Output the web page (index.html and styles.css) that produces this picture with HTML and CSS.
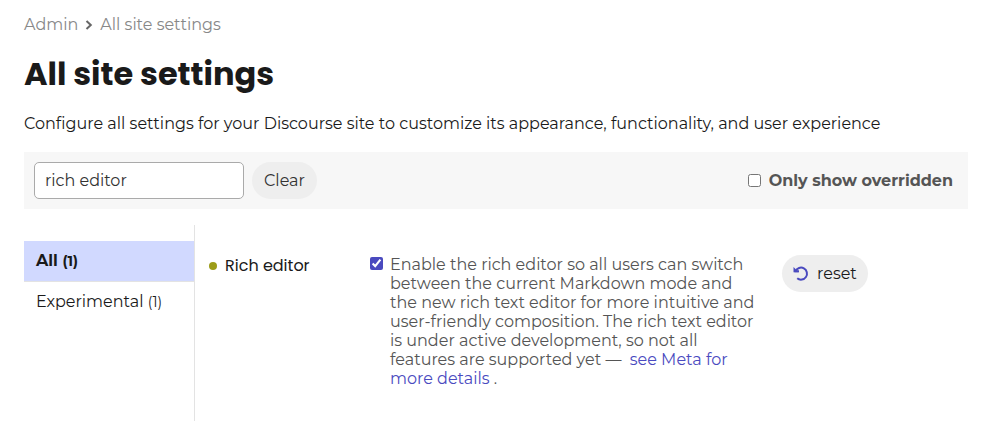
FILE: index.html
```html
<!DOCTYPE html>
<html lang="en">
<head>
  <meta charset="UTF-8">
  <meta name="viewport" content="width=device-width, initial-scale=1.0">
  <title>All site settings</title>
  <link rel="stylesheet" href="styles.css">
</head>
<body>
  <header class="page-header">
    <nav class="breadcrumbs">
      <a href="#">Admin</a>
      <svg class="chevron" viewBox="0 0 8 10" aria-hidden="true"><path d="M1.500 1l4.300 4-4.300 4"/></svg>
      <a href="#">All site settings</a>
    </nav>
    <h1>All site settings</h1>
    <p class="description">Configure all settings for your Discourse site to customize its appearance, functionality, and user experience</p>
  </header>

  <div class="controls">
    <input type="text" class="filter" value="rich editor" aria-label="Filter settings">
    <button type="button" class="btn">Clear</button>
    <label class="overridden"><input type="checkbox" class="checkbox"> Only show overridden</label>
  </div>

  <main class="settings">
    <nav class="categories">
      <a class="category active" href="#">All <span class="count">(1)</span></a>
      <a class="category" href="#">Experimental <span class="count">(1)</span></a>
    </nav>
    <section class="setting">
      <h3 class="setting-name">Rich editor</h3>
      <div class="setting-value">
        <input type="checkbox" class="checkbox" id="rich-editor" checked>
        <label for="rich-editor">Enable the rich editor so all users can switch between the current Markdown mode and the new rich text editor for more intuitive and user-friendly composition. The rich text editor is under active development, so not all features are supported yet —&nbsp; <a href="#">see Meta for more details</a> .</label>
      </div>
      <button type="button" class="btn reset">
        <svg class="undo" viewBox="0 0 16 16" aria-hidden="true">
          <path class="arrow" d="M.5 1v5.200h5.200z"/>
          <path d="M1.500 5.300H6M2.500 5.200A6 6 0 1 1 4.200 12.300"/>
        </svg>
        reset
      </button>
    </section>
  </main>
</body>
</html>
```
FILE: styles.css
```css
* {
  box-sizing: border-box;
}
body {
  margin: 0;
  padding: 15px 14px 0 24px;
  min-height: 100vh;
  display: flex;
  flex-direction: column;
  background: #fff;
  color: #1a1a1a;
  font-family: Montserrat, Inter, sans-serif;
  font-size: 16px;
  line-height: 19px;
}
a {
  color: #4a4abf;
  text-decoration: none;
}
.breadcrumbs {
  display: flex;
  align-items: center;
  gap: 7px;
}
.breadcrumbs a {
  color: #888;
}
.chevron {
  width: 8px;
  height: 10px;
  fill: none;
  stroke: #666;
  stroke-width: 2;
}
h1 {
  margin: 20px 0;
  font-family: Poppins, Inter, sans-serif;
  font-size: 32px;
  line-height: 40px;
  font-weight: 700;
}
.description {
  margin: 0 0 19px;
}
.controls {
  display: flex;
  align-items: center;
  gap: 8px;
  padding: 10px 15px 10px 10px;
  background: #f7f7f7;
}
.filter {
  width: 210px;
  height: 37px;
  padding: 0 10px;
  border: 1px solid #aaa;
  border-radius: 5px;
  background: #fff;
  color: #333;
  font: inherit;
}
.btn {
  height: 37px;
  padding: 0 12px;
  border: none;
  border-radius: 19px;
  background: #eee;
  color: #333;
  font: inherit;
  cursor: pointer;
}
.checkbox {
  flex: none;
  width: 13px;
  height: 13px;
  margin: 0;
  accent-color: #4a4abf;
}
.overridden {
  display: flex;
  align-items: center;
  gap: 8px;
  margin-left: auto;
  color: #555;
  font-weight: 700;
}
.settings {
  flex: 1;
  display: flex;
  margin-top: 16px;
}
.categories {
  width: 171px;
  padding-top: 16px;
  border-right: 1px solid #e3e3e3;
}
.category {
  display: block;
  padding: 10px 12px;
  border-bottom: 1px solid transparent;
  color: #1a1a1a;
}
.category.active {
  background: #d1d9ff;
  border-color: #e3e3e3;
  font-weight: 700;
}
.count {
  font-size: 14px;
}
.setting {
  flex: 1;
  display: flex;
  align-items: flex-start;
  padding: 30px 0 0 14px;
}
.setting-name {
  display: flex;
  align-items: center;
  gap: 8px;
  width: 161px;
  margin: 0;
  padding-top: 1px;
  font-family: Poppins, Inter, sans-serif;
  font-size: 16px;
  font-weight: 400;
}
.setting-name::before {
  content: "";
  width: 8px;
  height: 8px;
  border-radius: 50%;
  background: #9c9c18;
}
.setting-value {
  display: flex;
  gap: 7px;
  width: 386px;
  color: #555;
}
.setting-value .checkbox {
  margin-top: 2px;
}
.reset {
  display: flex;
  align-items: center;
  gap: 8px;
  margin-left: 26px;
  padding: 0 11px;
  color: #1a1a1a;
}
.undo {
  width: 16px;
  height: 16px;
  fill: none;
  stroke: #4a4abf;
  stroke-width: 2;
}
.undo .arrow {
  fill: #4a4abf;
  stroke: none;
}
```
